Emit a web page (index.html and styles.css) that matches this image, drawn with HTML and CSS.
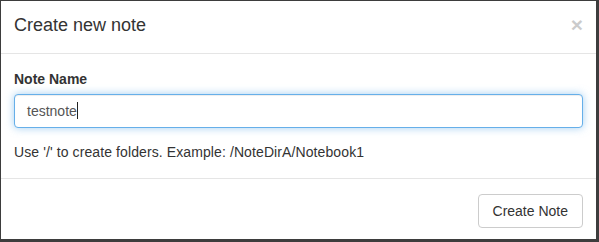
FILE: index.html
```html
<!DOCTYPE html>
<html>
<head>
  <title>Create new note</title>
  <meta name="viewport" content="width=device-width, initial-scale=1">
  <link rel="stylesheet" href="styles.css">
</head>
<body>

  <div class="modal">
    <div class="modal-header">
      <h4 class="modal-title">Create new note</h4>
      <button class="close" type="button">&times;</button>
    </div>

    <div class="modal-body">
      <div class="form-group">
        <label class="control-label">Note Name</label>
        <div class="form-control focused">testnote<span class="caret"></span></div>
      </div>
      <p class="help">Use '/' to create folders. Example: /NoteDirA/Notebook1</p>
    </div>

    <div class="modal-footer">
      <button class="btn" type="button">Create Note</button>
    </div>
  </div>

</body>
</html>
```

FILE: styles.css
```css
html, body {
  margin: 0;
  padding: 0;
  height: 242px;
  overflow: hidden;
}
body {
  font-family: "Liberation Sans", Arial, sans-serif;
  font-size: 14px;
  line-height: 20px;
  color: #333;
  background-color: #444;
}
.modal {
  box-sizing: border-box;
  height: 242px;
  background-color: #fff;
  border-style: solid;
  border-color: #3d3d3d;
  border-width: 1px 3px 3px 1px;
  overflow: hidden;
}
.modal-header {
  display: flex;
  justify-content: space-between;
  align-items: flex-start;
  padding: 13px 13px 17px;
  border-bottom: 1px solid #e5e5e5;
}
.modal-title {
  margin: 0;
  font-size: 18px;
  font-weight: normal;
  line-height: 22px;
}
.close {
  padding: 0;
  margin: 0;
  border: none;
  background: none;
  font-family: "Liberation Sans", Arial, sans-serif;
  font-size: 21px;
  font-weight: bold;
  line-height: 1;
  color: #000;
  opacity: 0.2;
  cursor: pointer;
}
.modal-body {
  padding: 15px 13px 16px;
}
.form-group {
  margin-bottom: 14px;
}
.control-label {
  display: block;
  font-weight: bold;
  margin-bottom: 5px;
}
.form-control {
  box-sizing: border-box;
  height: 34px;
  padding: 6px 12px;
  color: #555;
  background-color: #fff;
  border: 1px solid #ccc;
  border-radius: 4px;
}
.form-control.focused {
  border-color: #66afe9;
  box-shadow: inset 0 1px 1px rgba(0,0,0,0.075), 0 0 8px rgba(102,175,233,0.6);
}
.caret {
  display: inline-block;
  width: 1px;
  height: 17px;
  background-color: #222;
  vertical-align: -3px;
}
.help {
  margin: 0;
  letter-spacing: 0.1px;
}
.modal-footer {
  display: flex;
  justify-content: flex-end;
  padding: 15px 13px;
  border-top: 1px solid #e5e5e5;
}
.btn {
  font-family: "Liberation Sans", Arial, sans-serif;
  font-size: 14px;
  line-height: 20px;
  padding: 6px 14px;
  color: #333;
  background-color: #fff;
  border: 1px solid #ccc;
  border-radius: 4px;
  cursor: pointer;
}
```
